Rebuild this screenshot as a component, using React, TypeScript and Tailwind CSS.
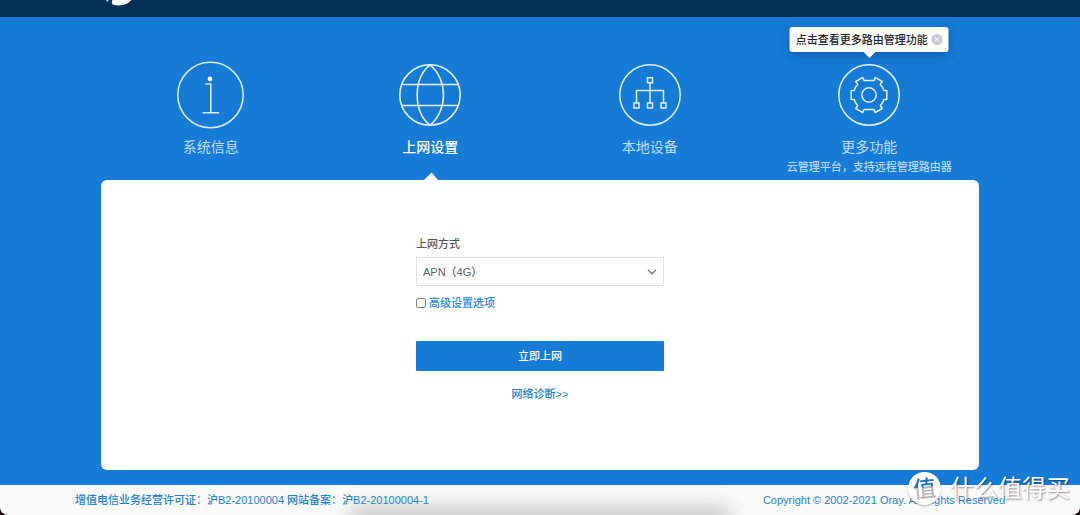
import React from 'react';

function InfoIcon() {
  return (
    <svg viewBox="0 0 68 68" className="size-[68px]" fill="none" stroke="#d9ecfc" strokeWidth="1.6" aria-hidden="true">
      <circle cx="33.5" cy="34" r="32.7" />
      <circle cx="33" cy="18" r="2.4" fill="#fff" stroke="none" />
      <path d="M28.500 23h5.300v28.500M25.500 51.800h16.500" />
    </svg>
  );
}

function GlobeIcon() {
  return (
    <svg viewBox="0 0 62 62" className="size-[62px]" fill="none" stroke="#e4f2fd" strokeWidth="1.6" aria-hidden="true">
      <circle cx="31" cy="31" r="30.2" />
      <path d="M31 .8C22 8 18.200 20 18.200 31S22 54 31 61.200M31 .8C40 8 44.500 20 44.500 31S40 54 31 61.200M3 20.500h56M3 41.500h56" />
    </svg>
  );
}

function DevicesIcon() {
  return (
    <svg viewBox="0 0 62 62" className="size-[62px]" fill="none" stroke="#e0f0fd" strokeWidth="1.5" aria-hidden="true">
      <circle cx="31" cy="31" r="30.2" />
      <path d="M28.500 13.800h5v5h-5zM15 39h5v5h-5zM28.500 39h5v5h-5zM42 39h5v5h-5zM31 18.800V39M17.500 39V26.500h27V39" />
    </svg>
  );
}

function GearIcon() {
  return (
    <svg viewBox="0 0 62 62" className="size-[62px]" fill="none" stroke="#e4f2fd" strokeWidth="1.5" aria-hidden="true">
      <circle cx="31" cy="31" r="30.2" />
      <circle cx="31" cy="31" r="7.2" />
      <path
        strokeLinejoin="round"
        d="M26 16.500 24.800 13.400 17.800 17.500 19.700 20.500Q17 23 16.200 26.500L13.200 26.500V35.500L16.200 35.500Q17 39 19.700 41.500L17.800 44.500 24.800 48.600 26 45.500H36L37.200 48.600 44.200 44.500 42.300 41.500Q45 39 45.800 35.500L48.800 35.500V26.500L45.800 26.500Q45 23 42.300 20.500L44.200 17.500 37.200 13.400 36 16.500Z"
      />
    </svg>
  );
}

type NavItem = {
  label: string;
  icon: React.ReactNode;
  active?: boolean;
  note?: string;
  tip?: string;
};

const items: NavItem[] = [
  { label: '系统信息', icon: <InfoIcon /> },
  { label: '上网设置', icon: <GlobeIcon />, active: true },
  { label: '本地设备', icon: <DevicesIcon /> },
  {
    label: '更多功能',
    icon: <GearIcon />,
    note: '云管理平台，支持远程管理路由器',
    tip: '点击查看更多路由管理功能',
  },
];

function Tooltip({ text }: { text: string }) {
  return (
    <div className="absolute left-1/2 top-[10px] flex h-[25px] -translate-x-1/2 items-center gap-1 rounded-[3px] bg-white px-[6px] whitespace-nowrap text-[#222] shadow-[0_3px_8px_rgba(0,30,80,0.3)]">
      <span>{text}</span>
      <button type="button" aria-label="关闭" className="flex size-[11px] items-center justify-center rounded-full bg-[#c3c8d2]">
        <svg viewBox="0 0 11 11" className="size-[11px]" stroke="#fff" strokeWidth="1" aria-hidden="true">
          <path d="M3.300 3.300l4.400 4.400M7.700 3.300 3.300 7.700" />
        </svg>
      </button>
      <svg viewBox="0 0 12 6" className="absolute left-1/2 top-full h-[6px] w-[12px] -translate-x-1/2" aria-hidden="true">
        <path d="M0 0h12L6 6z" fill="#fff" />
      </svg>
    </div>
  );
}

export default function App() {
  return (
    <div
      lang="zh-CN"
      className="relative flex min-h-screen flex-col overflow-hidden bg-[#1d0410] font-['Liberation_Sans','Noto_Sans_CJK_SC',sans-serif] text-[11px] leading-4 font-medium"
    >
      <header className="h-[17px] overflow-hidden bg-[#033054] px-[104px]">
        <svg viewBox="0 0 32 17" className="h-[17px] w-8" aria-label="Oray" role="img">
          <path d="M8.500 0H27.500Q25 3.200 20 4.800Q13 6.400 8.500 4.300Q7 3 8.500 0z" fill="#fff" />
          <path d="M2 0h3L4 1.500H2.500z" fill="#b8c8d4" />
        </svg>
      </header>

      <div className="flex flex-1 flex-col bg-[#167bd6] px-[101px] pb-[15px]">
        <nav className="grid grid-cols-4">
          {items.map((item) => (
            <div key={item.label} className="relative flex h-[163px] flex-col items-center">
              <a href="#" className="flex flex-col items-center">
                <span className="mt-[44px] flex h-[68px] items-center justify-center">{item.icon}</span>
                <span className={item.active ? 'mt-2 text-[14px] leading-5 text-white' : 'mt-2 text-[14px] leading-5 font-normal text-[#c0def8]'}>
                  {item.label}
                </span>
              </a>
              {item.note && <p className="mt-0.5 whitespace-nowrap text-[#b9daf7]">{item.note}</p>}
              {item.tip && <Tooltip text={item.tip} />}
              {item.active && (
                <svg viewBox="0 0 16 8" className="absolute bottom-0 left-1/2 h-2 w-4 -translate-x-1/2" aria-hidden="true">
                  <path d="M9.500 0.500l6.500 7.500H2z" fill="#fff" />
                </svg>
              )}
            </div>
          ))}
        </nav>

        <main className="flex flex-1 justify-center rounded-[6px] bg-white px-4 pt-[56px] pb-[67px]">
          <form className="flex w-[248px] flex-col" onSubmit={(e) => e.preventDefault()}>
            <label htmlFor="mode" className="text-[#555]">
              上网方式
            </label>
            <div className="relative mt-[5px]">
              <select
                id="mode"
                className="h-[29px] w-full appearance-none border border-[#e0e0e0] bg-white px-[6px] text-[#606060]"
              >
                <option>APN（4G）</option>
              </select>
              <svg viewBox="0 0 10 6" className="pointer-events-none absolute top-3 right-[7px] h-[6px] w-[10px]" fill="none" stroke="#777" strokeWidth="1.3" aria-hidden="true">
                <path d="M1 .8l4 4 4-4" />
              </svg>
            </div>
            <div className="mt-[9px] flex items-center gap-[3px]">
              <input
                id="advanced"
                type="checkbox"
                className="size-[10px] appearance-none rounded-[2px] border border-[#858585] bg-white checked:bg-[#167bd6]"
              />
              <label htmlFor="advanced" className="text-[#2a8ae0]">
                高级设置选项
              </label>
            </div>
            <button type="submit" className="mt-[30px] h-[30px] rounded-[1px] bg-[#167bd6] text-white">
              立即上网
            </button>
            <a href="#" className="mt-[15px] self-center text-[#2482d0]">
              网络诊断&gt;&gt;
            </a>
          </form>
        </main>
      </div>

      <footer className="relative flex h-[30px] items-center justify-between overflow-hidden rounded-b-[8px] bg-[#fafafa] px-[75px] text-[#2482d0]">
        <div className="absolute inset-x-[350px] -bottom-4 h-6 bg-black/20 blur-[10px]" aria-hidden="true" />
        <p className="relative whitespace-nowrap">
          增值电信业务经营许可证：<a href="#">沪B2-20100004</a> 网站备案：<a href="#">沪B2-20100004-1</a>
        </p>
        <p className="relative whitespace-nowrap">Copyright © 2002-2021 Oray. All Rights Reserved</p>
      </footer>

      <div className="pointer-events-none absolute right-[10px] bottom-[10px] flex items-center gap-[9px] font-normal text-white">
        <span className="flex size-[33px] items-center justify-center rounded-full bg-white text-[23px] leading-8 shadow-[0_1px_2px_rgba(0,0,0,0.3)]">
          <span className="-rotate-6 bg-linear-to-b from-[#1670c0] from-42% to-[#b4b4b4] to-46% bg-clip-text font-medium text-transparent">值</span>
        </span>
        <span className="text-[24px] leading-8 [text-shadow:1px_1px_2px_rgba(0,0,0,0.45)]">什么值得买</span>
      </div>
    </div>
  );
}
